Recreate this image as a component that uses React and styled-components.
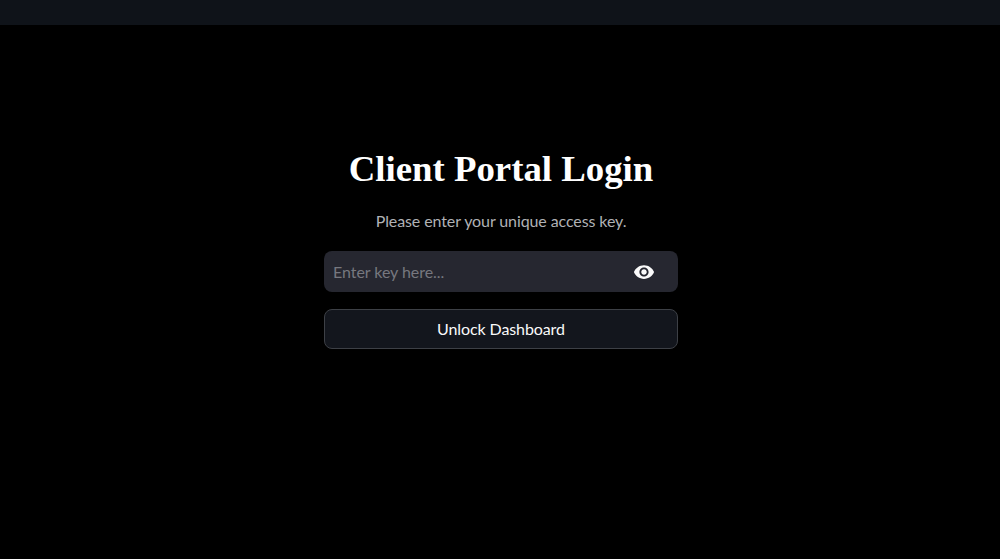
import React from 'react';
import styled, { createGlobalStyle } from 'styled-components';
import { MdVisibility } from 'react-icons/md';

const GlobalStyle = createGlobalStyle`
  html, body {
    margin: 0;
    padding: 0;
    height: 100%;
    background: #000;
  }
  #root {
    height: 100%;
  }
`;

const Page = styled.div`
  display: flex;
  flex-direction: column;
  height: 559px;
  overflow: hidden;
  background: #000;
  font-family: Lato, "Noto Sans", sans-serif;
`;

const TopBar = styled.header`
  height: 25px;
  flex-shrink: 0;
  background: #0f1319;
`;

const Main = styled.main`
  display: flex;
  justify-content: center;
  padding: 122px 0 0 2px;
`;

const LoginColumn = styled.div`
  display: flex;
  flex-direction: column;
  width: 354px;
`;

const Title = styled.h1`
  margin: 0;
  font-family: "Liberation Serif", "Times New Roman", serif;
  font-size: 36.8px;
  line-height: 44px;
  font-weight: 700;
  color: #fff;
  text-align: center;
`;

const Subtitle = styled.p`
  margin: 19px 0 0;
  font-size: 16px;
  line-height: 22px;
  letter-spacing: -0.1px;
  color: #b0b2b5;
  text-align: center;
`;

const KeyField = styled.div`
  display: flex;
  align-items: center;
  height: 41px;
  margin-top: 19px;
  background: #262730;
  border-radius: 8px;
`;

const KeyInput = styled.input`
  flex: 1;
  min-width: 0;
  height: 100%;
  padding: 0 0 0 9px;
  border: 0;
  outline: 0;
  background: transparent;
  font: inherit;
  font-size: 16px;
  letter-spacing: -0.05px;
  color: #fafafa;

  &::placeholder {
    color: #77787f;
    opacity: 1;
  }
`;

const EyeButton = styled.button`
  display: flex;
  align-items: center;
  justify-content: center;
  width: 24px;
  height: 24px;
  margin-right: 22px;
  padding: 0;
  border: 0;
  background: none;
  color: #fafafa;
  cursor: pointer;
`;

const UnlockButton = styled.button`
  height: 40px;
  margin-top: 17px;
  padding: 0 0 2px;
  border: 1px solid #3d4046;
  border-radius: 8px;
  background: #13161d;
  font: inherit;
  font-size: 16px;
  letter-spacing: -0.1px;
  color: #fafafa;
  cursor: pointer;
`;

export default function App() {
  return (
    <Page>
      <GlobalStyle />
      <TopBar />
      <Main>
        <LoginColumn>
          <Title>Client Portal Login</Title>
          <Subtitle>Please enter your unique access key.</Subtitle>
          <KeyField>
            <KeyInput type="password" placeholder="Enter key here..." />
            <EyeButton type="button" aria-label="Show key">
              <MdVisibility size={22} />
            </EyeButton>
          </KeyField>
          <UnlockButton type="button">Unlock Dashboard</UnlockButton>
        </LoginColumn>
      </Main>
    </Page>
  );
}
